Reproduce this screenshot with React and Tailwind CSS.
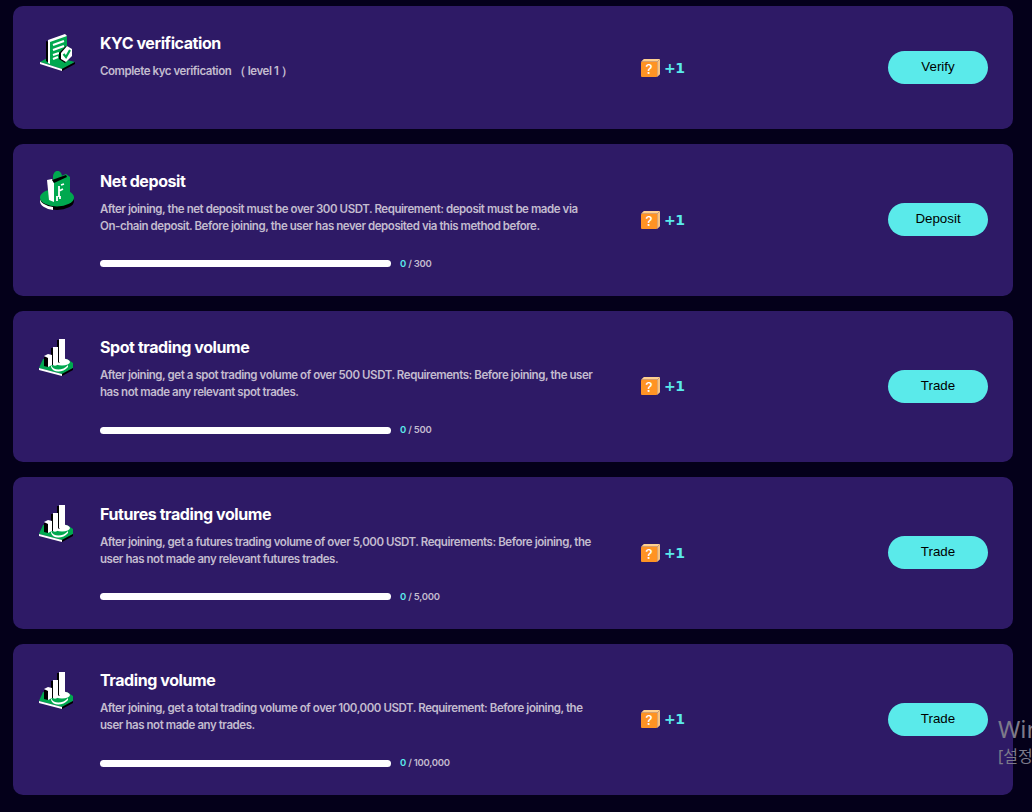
const TASKS = [
  {
    title: 'KYC verification',
    desc: ['Complete kyc verification （ level 1 ）'],
    icon: 'kyc',
    action: 'Verify',
    h: 'h-[123px]',
  },
  {
    title: 'Net deposit',
    desc: [
      'After joining, the net deposit must be over 300 USDT. Requirement: deposit must be made via',
      'On-chain deposit. Before joining, the user has never deposited via this method before.',
    ],
    icon: 'deposit',
    action: 'Deposit',
    total: '300',
    h: 'h-[151.5px]',
  },
  {
    title: 'Spot trading volume',
    desc: [
      'After joining, get a spot trading volume of over 500 USDT. Requirements: Before joining, the user',
      'has not made any relevant spot trades.',
    ],
    icon: 'chart',
    action: 'Trade',
    total: '500',
    h: 'h-[151.5px]',
  },
  {
    title: 'Futures trading volume',
    desc: [
      'After joining, get a futures trading volume of over 5,000 USDT. Requirements: Before joining, the',
      'user has not made any relevant futures trades.',
    ],
    icon: 'chart',
    action: 'Trade',
    total: '5,000',
    h: 'h-[151.5px]',
  },
  {
    title: 'Trading volume',
    desc: [
      'After joining, get a total trading volume of over 100,000 USDT. Requirement: Before joining, the',
      'user has not made any trades.',
    ],
    icon: 'chart',
    action: 'Trade',
    total: '100,000',
    h: 'h-[151.5px]',
  },
]

function KycIcon() {
  return (
    <svg width="40" height="42" viewBox="0 0 40 42">
      <path d="M1 29 L12 23 L36 29 L23 36 Z" fill="#00a84f" />
      <path d="M1 29 L1 31 L23 38 L23 36 Z" fill="#fff" />
      <path d="M23 36 L36 29 L36 31 L23 38 Z" fill="#000" />
      <path d="M7 8 L7 28 L10 30 L10 9 Z" fill="#000" />
      <path d="M9 8 L27 2 L28 4 L28 24 L13 31 L10 30 Z" fill="#00a84f" />
      <path d="M9 7 L26 1 L28 3 L11 9 L11 31 L9 30 Z" fill="#fff" />
      <path d="M14 12 L25 8 M14 17 L25 13 M14 22 L20 20 M14 26 L19 24" stroke="#fff" strokeWidth="2" fill="none" />
      <path d="M20 20 L27 13 L31 15 L31 24 L26 30 L20 26 Z" fill="#000" />
      <path d="M22 20 L28 13 L33 16 L33 23 L27 29 L22 26 Z" fill="#fff" />
      <path d="M24.5 21 L27 24 L31 17" stroke="#00a84f" strokeWidth="2.2" fill="none" />
    </svg>
  )
}

function DepositIcon() {
  return (
    <svg width="40" height="42" viewBox="0 0 40 42">
      <ellipse cx="18" cy="30" rx="17" ry="9" fill="#000" />
      <path d="M1 27 A17 9 0 0 0 14 36 L14 39 A17 9 0 0 1 1 30 Z" fill="#fff" />
      <ellipse cx="18" cy="26.5" rx="17" ry="9" fill="#00a84f" />
      <path d="M14 6 A4 5 0 0 1 23 5 L23 9 L14 11 Z" fill="#00a84f" />
      <path d="M13 9 L27 3 L31 6 L31 24 L15 31 L13 30 Z" fill="#00a84f" />
      <path d="M8 9 L13 8 L15 12 L15 31 L10 29 Z" fill="#fff" />
      <path d="M13 9 L27 4 L28 6 L15 12 Z" fill="#000" />
      <path d="M22 14 L25 13 M20 15 L20 26 M20 20 L24 18 M18 25 L18 30 M21 25 L21 28" stroke="#fff" strokeWidth="1.8" fill="none" />
    </svg>
  )
}

function ChartIcon() {
  return (
    <svg width="40" height="42" viewBox="0 0 40 42">
      <path d="M0 30 L4 21 L28 21 L34 25 L34 30 L23 36 Z" fill="#00a84f" />
      <path d="M0 30 L23 36 L23 38 L0 32 Z" fill="#fff" />
      <path d="M23 36 L34 30 L34 32 L23 38 Z" fill="#000" />
      <path d="M12 27 C 14 33 24 33 29 27 L29 29 C 24 35 14 35 12 29 Z" fill="#fff" />
      <ellipse cx="23" cy="24" rx="8" ry="3.5" fill="#fff" />
      <path d="M18 2 L18 24 L21 25 L21 2 Z" fill="#000" />
      <path d="M20 1 L26 1 L26 23 C 25 26 21 26 20 24 Z" fill="#fff" />
      <path d="M12 10 L12 27 L15 27 L15 10 Z" fill="#000" />
      <path d="M14 9 L19 9 L19 26 C 18 28 15 28 14 27 Z" fill="#fff" />
      <path d="M5 19 L5 28 L9 29 L9 19 Z" fill="#000" />
      <path d="M5 18 L9 16 L13 17 L13 27 L9 29 L9 20 Z" fill="#fff" />
    </svg>
  )
}

const ICONS = { kyc: KycIcon, deposit: DepositIcon, chart: ChartIcon }

function MysteryBox() {
  return (
    <svg width="19" height="19" viewBox="0 0 20 20">
      <path d="M0 3 L3 0 L20 0 L17 3 Z" fill="#ffd08f" />
      <path d="M17 3 L20 0 L20 16 L17 19 Z" fill="#f7c382" />
      <rect x="0" y="3" width="17" height="16" rx="1" fill="#ff9324" />
      <text x="8.5" y="16" textAnchor="middle" fontSize="14" fontWeight="500" fill="#fff" fontFamily="Inter, sans-serif">?</text>
    </svg>
  )
}

function TaskCard({ task }) {
  const Icon = ICONS[task.icon]
  return (
    <div className={`flex items-start rounded-[10px] bg-[#2e1a66] pl-[26px] pr-[25px] ${task.h}`}>
      <div className="mt-[27px] w-[61px] shrink-0">
        <Icon />
      </div>
      <div className="w-[541px] shrink-0 pt-[26.6px]">
        <h3 className="text-[16px] leading-[20px] font-bold tracking-[-0.42px] text-white">{task.title}</h3>
        <div className="mt-[10px] text-[11.5px] leading-[17px] font-semibold tracking-[-0.44px] text-[#c3bccf]">
          {task.desc.map((line) => (
            <p key={line}>{line}</p>
          ))}
        </div>
        {task.total && (
          <div className="mt-[23px] flex items-center gap-[9px]">
            <div className="h-[7px] w-[291px] rounded-full bg-white" />
            <span className="text-[9.5px] leading-[12px] font-semibold tracking-[-0.25px] text-[#c3bccf]">
              <span className="text-[#5aeaea]">0</span> / {task.total}
            </span>
          </div>
        )}
      </div>
      <div className="flex h-full flex-1 items-center justify-between">
        <div className="flex items-center gap-[4px] pt-[1px]">
          <MysteryBox />
          <span className="font-['DejaVu_Sans'] text-[14px] font-bold tracking-[-0.5px] text-[#5aeaea]">+1</span>
        </div>
        <button className="flex h-[33px] w-[100px] items-center justify-center rounded-full bg-[#5aeaea] pb-[1px] font-['Liberation_Sans',sans-serif] text-[13.33px] text-black">
          {task.action}
        </button>
      </div>
    </div>
  )
}

export default function App() {
  return (
    <div className="relative h-[812px] w-[1032px] overflow-hidden bg-[#04001a] font-['Inter',sans-serif]">
      <div className="flex flex-col gap-[15px] pl-[13px] pr-[19px] pt-[6px]">
        {TASKS.map((task) => (
          <TaskCard key={task.title} task={task} />
        ))}
      </div>
      {/* 정품 인증 워터마크 */}
      <div className="pointer-events-none absolute left-[998px] top-[714px] whitespace-nowrap font-['Noto_Sans','Noto_Sans_CJK_KR',sans-serif] text-[#7d7a8a]">
        <div className="text-[24px] leading-[30px]">Windows 정품 인증</div>
        <div className="text-[16px] leading-[24px]">[설정]으로 이동하여 Windows를</div>
      </div>
    </div>
  )
}
